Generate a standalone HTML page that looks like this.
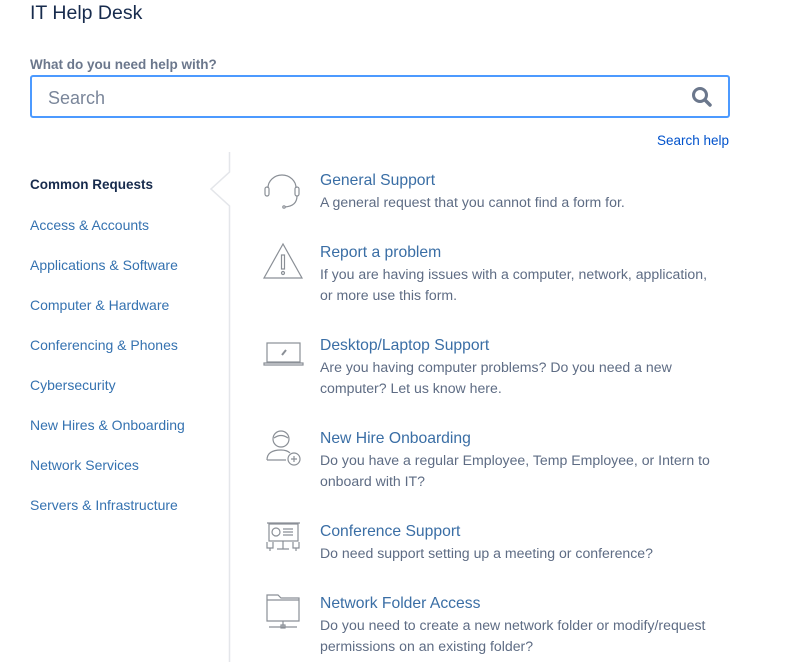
<!DOCTYPE html>
<html><head><meta charset="utf-8"><style>
body{margin:0;width:801px;height:661px;overflow:hidden;background:#fff;font-family:"Liberation Sans",sans-serif;position:relative}
.a{position:absolute;white-space:nowrap}
h1{position:absolute;left:30px;top:2px;margin:0;font-size:19.5px;font-weight:normal;color:#172b4d}
.lab{left:30px;top:57px;font-size:13.5px;font-weight:bold;color:#6b778c}
.box{position:absolute;left:30px;top:75px;width:696px;height:39px;border:2px solid #4c9aff;border-radius:3px}
.ph{left:16px;top:11px;font-size:18px;color:#7a869a}
.sh{left:657px;top:133px;font-size:13.5px;color:#0052cc}
.nav{left:30px;font-size:14px;color:#3572b0}
.t{left:320px;font-size:15.7px;color:#3a6ea5}
.d{left:320px;font-size:14.1px;color:#5e6c84;line-height:21px}
svg{position:absolute}
</style></head><body>
<h1>IT Help Desk</h1>
<div class="a lab">What do you need help with?</div>
<div class="box"><div class="a ph">Search</div>
<svg style="left:658px;top:8px" width="24" height="24" viewBox="0 0 24 24"><circle cx="10" cy="10" r="6.5" fill="none" stroke="#6b778c" stroke-width="3"/><path d="M15 15l5 5" stroke="#6b778c" stroke-width="3.5" stroke-linecap="round"/></svg></div>
<div class="a sh">Search help</div>
<svg style="left:205px;top:152px" width="30" height="510"><path d="M24.5 0V20L6 37L24.5 54V510" fill="none" stroke="#e4e6ea" stroke-width="1.5"/></svg>
<div class="a nav" style="top:177px;color:#172b4d;font-weight:bold;font-size:13.5px">Common Requests</div>
<div class="a nav" style="top:217px">Access &amp; Accounts</div>
<div class="a nav" style="top:257px">Applications &amp; Software</div>
<div class="a nav" style="top:297px">Computer &amp; Hardware</div>
<div class="a nav" style="top:337px">Conferencing &amp; Phones</div>
<div class="a nav" style="top:377px">Cybersecurity</div>
<div class="a nav" style="top:417px">New Hires &amp; Onboarding</div>
<div class="a nav" style="top:457px">Network Services</div>
<div class="a nav" style="top:497px">Servers &amp; Infrastructure</div>

<svg style="left:262px;top:170px" width="40" height="40" fill="none" stroke="#8a8f96" stroke-width="1.2"><path d="M6 18a14 13 0 0 1 28 0"/><rect x="3" y="17" width="4" height="9" rx="2"/><rect x="33" y="17" width="4" height="9" rx="2"/><path d="M35 26q0 10-12 11"/><circle cx="22" cy="37" r="1.2"/></svg>
<div class="a t" style="top:172px">General Support</div>
<div class="a d" style="top:192px">A general request that you cannot find a form for.</div>

<svg style="left:262px;top:241px" width="42" height="40" fill="none" stroke="#8a8f96" stroke-width="1.2"><path d="M21 3L2 37H40Z"/><rect x="19.5" y="14" width="3" height="14"/><circle cx="21" cy="32" r="1.5"/></svg>
<div class="a t" style="top:244px">Report a problem</div>
<div class="a d" style="top:264px">If you are having issues with a computer, network, application,<br>or more use this form.</div>

<svg style="left:263px;top:340px" width="42" height="28" fill="none" stroke="#8a8f96" stroke-width="1.2"><rect x="4" y="3" width="33" height="19"/><path d="M1 23H40v2H1z"/><path d="M19 15l4-5" stroke-width="2"/></svg>
<div class="a t" style="top:337px">Desktop/Laptop Support</div>
<div class="a d" style="top:357px">Are you having computer problems? Do you need a new<br>computer? Let us know here.</div>

<svg style="left:264px;top:428px" width="40" height="40" fill="none" stroke="#8a8f96" stroke-width="1.2"><circle cx="17" cy="11" r="8"/><path d="M10 10q7-5 14 0"/><path d="M3 32q0-10 14-10q6 0 9 3"/><path d="M3 32h19"/><circle cx="30" cy="31" r="6"/><path d="M30 28v6M27 31h6"/></svg>
<div class="a t" style="top:430px">New Hire Onboarding</div>
<div class="a d" style="top:450px">Do you have a regular Employee, Temp Employee, or Intern to<br>onboard with IT?</div>

<svg style="left:265px;top:520px" width="40" height="40" fill="none" stroke="#8a8f96" stroke-width="1.2"><path d="M2 3H35"/><rect x="4" y="4" width="29" height="17"/><circle cx="11" cy="12" r="4"/><path d="M18 9h10M18 12h10M18 15h10"/><path d="M18 21v8M12 29h12M2 22v6h6v-6M28 22v6h6v-6M5 28v3M31 28v3"/></svg>
<div class="a t" style="top:523px">Conference Support</div>
<div class="a d" style="top:543px">Do need support setting up a meeting or conference?</div>

<svg style="left:265px;top:592px" width="40" height="40" fill="none" stroke="#8a8f96" stroke-width="1.2"><path d="M2 3h11l3 3h18v23H2z"/><path d="M2 8h32"/><path d="M18 29v6M4 35h28"/><rect x="16" y="33" width="4" height="3"/></svg>
<div class="a t" style="top:595px">Network Folder Access</div>
<div class="a d" style="top:615px">Do you need to create a new network folder or modify/request<br>permissions on an existing folder?</div>
</body></html>
